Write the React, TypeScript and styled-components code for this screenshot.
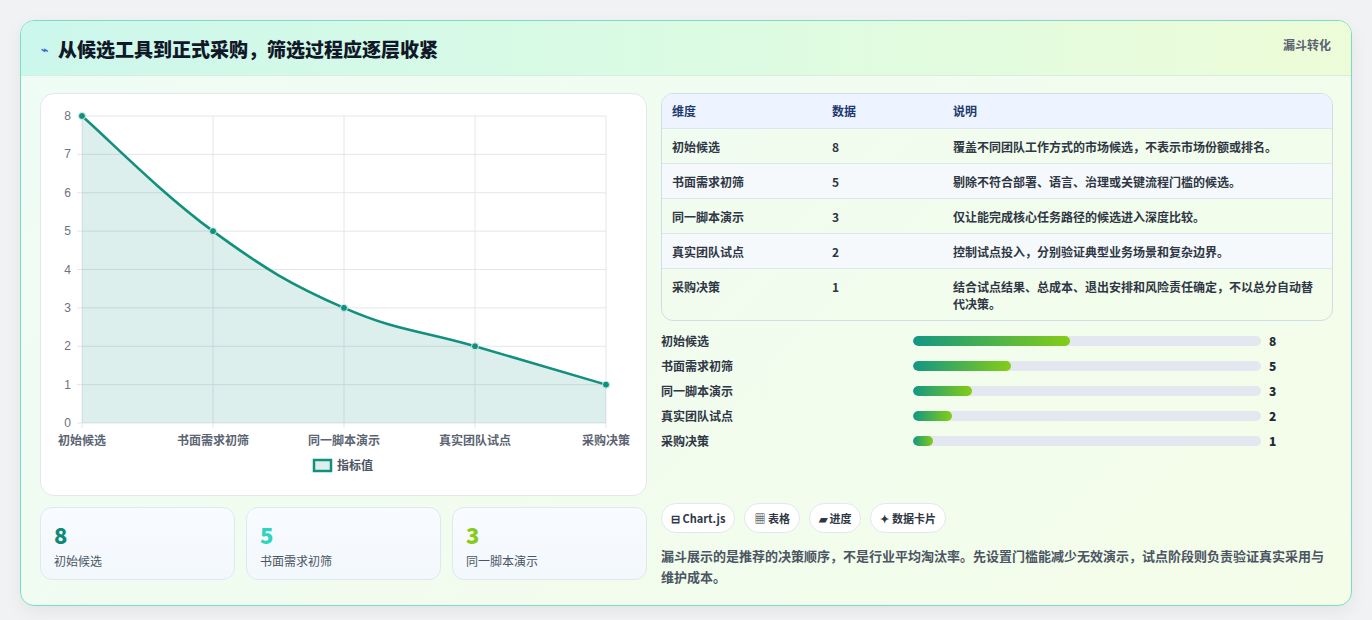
import React from "react";
import styled, { createGlobalStyle } from "styled-components";

const Global = createGlobalStyle`
  body { margin: 0; background: #f1f2f3; font-family: "Noto Sans CJK SC", "Noto Sans", sans-serif; }
`;

const Page = styled.div`
  padding: 20px;
  width: 1372px;
  box-sizing: border-box;
`;
const Card = styled.div`
  border: 1px solid #7ddcc6;
  border-radius: 14px;
  overflow: hidden;
  background: linear-gradient(135deg, #effcf6 0%, #f4fde8 100%);
  box-shadow: 0 6px 18px rgba(0,0,0,0.06);
`;
const Header = styled.div`
  height: 54px;
  display: flex;
  align-items: center;
  justify-content: space-between;
  padding: 0 20px;
  background: linear-gradient(90deg, #ccf7ec 0%, #dbfbe3 50%, #edfcd8 100%);
  border-bottom: 1px solid #d6efe3;
`;
const Title = styled.h1`
  margin: 0;
  font-size: 19px;
  font-weight: 800;
  color: #111827;
  display: flex;
  align-items: center;
  gap: 10px;
`;
const Bolt = styled.span`
  color: #3b6fd8;
  font-size: 12px;
`;
const Tag = styled.span`
  font-size: 12px;
  font-weight: 700;
  color: #5b6472;
  align-self: flex-start;
  margin-top: 15px;
`;
const Body = styled.div`
  display: grid;
  grid-template-columns: 607px 672px;
  gap: 14px;
  padding: 17px 19px 18px 19px;
`;
const Col = styled.div`
  display: flex;
  flex-direction: column;
`;
const ChartCard = styled.div`
  height: 403px;
  background: #fff;
  border: 1px solid #e3e8ee;
  border-radius: 14px;
  box-sizing: border-box;
`;
const Stats = styled.div`
  display: grid;
  grid-template-columns: repeat(3, 1fr);
  gap: 11px;
  margin-top: 11px;
`;
const Stat = styled.div`
  height: 73px;
  box-sizing: border-box;
  border: 1px solid #dfe8f0;
  border-radius: 12px;
  background: linear-gradient(180deg, #f8fbff, #f3f8fd);
  padding: 12px 13px;
`;
const StatNum = styled.div<{ c: string }>`
  font-size: 22px;
  font-weight: 900;
  color: ${p => p.c};
  line-height: 28px;
`;
const StatLabel = styled.div`
  font-size: 12px;
  color: #4b5563;
  margin-top: 4px;
`;
const Table = styled.div`
  border: 1px solid #cfdde8;
  border-radius: 12px;
  overflow: hidden;
  font-size: 12px;
  font-weight: 700;
  color: #2f3744;
`;
const Row = styled.div<{ head?: boolean; alt?: boolean }>`
  display: grid;
  grid-template-columns: 160px 121px 1fr;
  padding: ${p => (p.head ? "8px 10px 9px" : "9px 10px 8px")};
  line-height: 17px;
  background: ${p => (p.head ? "#edf4ff" : p.alt ? "#f6f9fc" : "transparent")};
  color: ${p => (p.head ? "#1e3a6e" : "#2f3744")};
  border-top: ${p => (p.head ? "none" : "1px solid #dde6ee")};
`;
const Bars = styled.div`
  display: flex;
  flex-direction: column;
  gap: 9px;
  margin-top: 11px;
`;
const BarRow = styled.div`
  display: grid;
  grid-template-columns: 252px 348px 1fr;
  align-items: center;
  font-size: 12px;
  font-weight: 600;
  color: #2f3744;
  height: 16px;
`;
const Track = styled.div`
  height: 10px;
  border-radius: 5px;
  background: #e3e7ef;
  overflow: hidden;
`;
const Fill = styled.div`
  height: 100%;
  border-radius: 5px;
  background: linear-gradient(90deg, #139783, #84cc16);
`;
const BarVal = styled.span`
  padding-left: 8px;
  font-weight: 800;
  color: #1f2937;
`;
const Chips = styled.div`
  display: flex;
  gap: 9px;
  margin-top: 55px;
`;
const Chip = styled.span`
  font-size: 11px;
  font-weight: 700;
  color: #2f3744;
  background: #fff;
  border: 1px solid #e2e8f0;
  border-radius: 15px;
  padding: 6px 9px;
`;
const Note = styled.p`
  margin: 12px 0 0;
  font-size: 13px;
  font-weight: 600;
  line-height: 21px;
  color: #4b5563;
`;

const vals = [8, 5, 3, 2, 1];
const labels = ["初始候选", "书面需求初筛", "同一脚本演示", "真实团队试点", "采购决策"];
const descs = [
  "覆盖不同团队工作方式的市场候选，不表示市场份额或排名。",
  "剔除不符合部署、语言、治理或关键流程门槛的候选。",
  "仅让能完成核心任务路径的候选进入深度比较。",
  "控制试点投入，分别验证典型业务场景和复杂边界。",
  "结合试点结果、总成本、退出安排和风险责任确定，不以总分自动替代决策。",
];

const X0 = 41, X1 = 565, Y0 = 22, Y1 = 329;
const px = (i: number) => X0 + (i * (X1 - X0)) / 4;
const py = (v: number) => Y1 - (v / 8) * (Y1 - Y0);

function curve() {
  const pts = vals.map((v, i) => [px(i), py(v)]);
  let d = `M${pts[0][0]},${pts[0][1]}`;
  const t = 0.2;
  for (let i = 0; i < pts.length - 1; i++) {
    const p0 = pts[Math.max(0, i - 1)], p1 = pts[i], p2 = pts[i + 1], p3 = pts[Math.min(pts.length - 1, i + 2)];
    const c1 = [p1[0] + (p2[0] - p0[0]) * t, p1[1] + (p2[1] - p0[1]) * t];
    const c2 = [p2[0] - (p3[0] - p1[0]) * t, p2[1] - (p3[1] - p1[1]) * t];
    d += ` C${c1[0]},${c1[1]} ${c2[0]},${c2[1]} ${p2[0]},${p2[1]}`;
  }
  return d;
}

function Chart() {
  const line = curve();
  return (
    <svg width="607" height="403" style={{ display: "block" }}>
      {[0, 1, 2, 3, 4, 5, 6, 7, 8].map(v => (
        <g key={v}>
          <line x1={X0 - 5} x2={X1} y1={py(v)} y2={py(v)} stroke="#e3e6ea" />
          <text x={X0 - 11} y={py(v) + 4} fontSize="12" fill="#6b7280" textAnchor="end" fontFamily="Liberation Sans, sans-serif">{v}</text>
        </g>
      ))}
      {[0, 1, 2, 3, 4].map(i => (
        <g key={i}>
          <line x1={px(i)} x2={px(i)} y1={Y0} y2={Y1 + 5} stroke="#e3e6ea" />
          <text x={px(i)} y={Y1 + 22} fontSize="12" fontWeight="600" fill="#5b6472" textAnchor="middle" fontFamily="Noto Sans CJK SC, sans-serif">{labels[i]}</text>
        </g>
      ))}
      <path d={`${line} L${X1},${Y1} L${X0},${Y1} Z`} fill="rgba(15,140,120,0.14)" />
      <path d={line} fill="none" stroke="#12907e" strokeWidth="2.6" />
      {vals.map((v, i) => (
        <circle key={i} cx={px(i)} cy={py(v)} r="3.5" fill="#12907e" stroke="#cdeee6" strokeWidth="1" />
      ))}
      <rect x="273" y="366" width="17" height="11" fill="#dcefec" stroke="#12907e" strokeWidth="2.5" />
      <text x="296" y="376" fontSize="12" fontWeight="600" fill="#4b5563" fontFamily="Noto Sans CJK SC, sans-serif">指标值</text>
    </svg>
  );
}

export default function App() {
  return (
    <>
      <Global />
      <Page>
        <Card>
          <Header>
            <Title><Bolt>⌁</Bolt>从候选工具到正式采购，筛选过程应逐层收紧</Title>
            <Tag>漏斗转化</Tag>
          </Header>
          <Body>
            <Col>
              <ChartCard><Chart /></ChartCard>
              <Stats>
                <Stat><StatNum c="#0f8a78">8</StatNum><StatLabel>初始候选</StatLabel></Stat>
                <Stat><StatNum c="#2dd4bf">5</StatNum><StatLabel>书面需求初筛</StatLabel></Stat>
                <Stat><StatNum c="#84cc16">3</StatNum><StatLabel>同一脚本演示</StatLabel></Stat>
              </Stats>
            </Col>
            <Col>
              <Table>
                <Row head><span>维度</span><span>数据</span><span>说明</span></Row>
                {labels.map((l, i) => (
                  <Row key={l} alt={i % 2 === 1}><span>{l}</span><span>{vals[i]}</span><span>{descs[i]}</span></Row>
                ))}
              </Table>
              <Bars>
                {labels.map((l, i) => (
                  <BarRow key={l}>
                    <span>{l}</span>
                    <Track><Fill style={{ width: `${(vals[i] / 8) * 45}%` }} /></Track>
                    <BarVal>{vals[i]}</BarVal>
                  </BarRow>
                ))}
              </Bars>
              <Chips>
                <Chip>⊟ Chart.js</Chip>
                <Chip>▦ 表格</Chip>
                <Chip>▰ 进度</Chip>
                <Chip>✦ 数据卡片</Chip>
              </Chips>
              <Note>漏斗展示的是推荐的决策顺序，不是行业平均淘汰率。先设置门槛能减少无效演示，试点阶段则负责验证真实采用与维护成本。</Note>
            </Col>
          </Body>
        </Card>
      </Page>
    </>
  );
}
